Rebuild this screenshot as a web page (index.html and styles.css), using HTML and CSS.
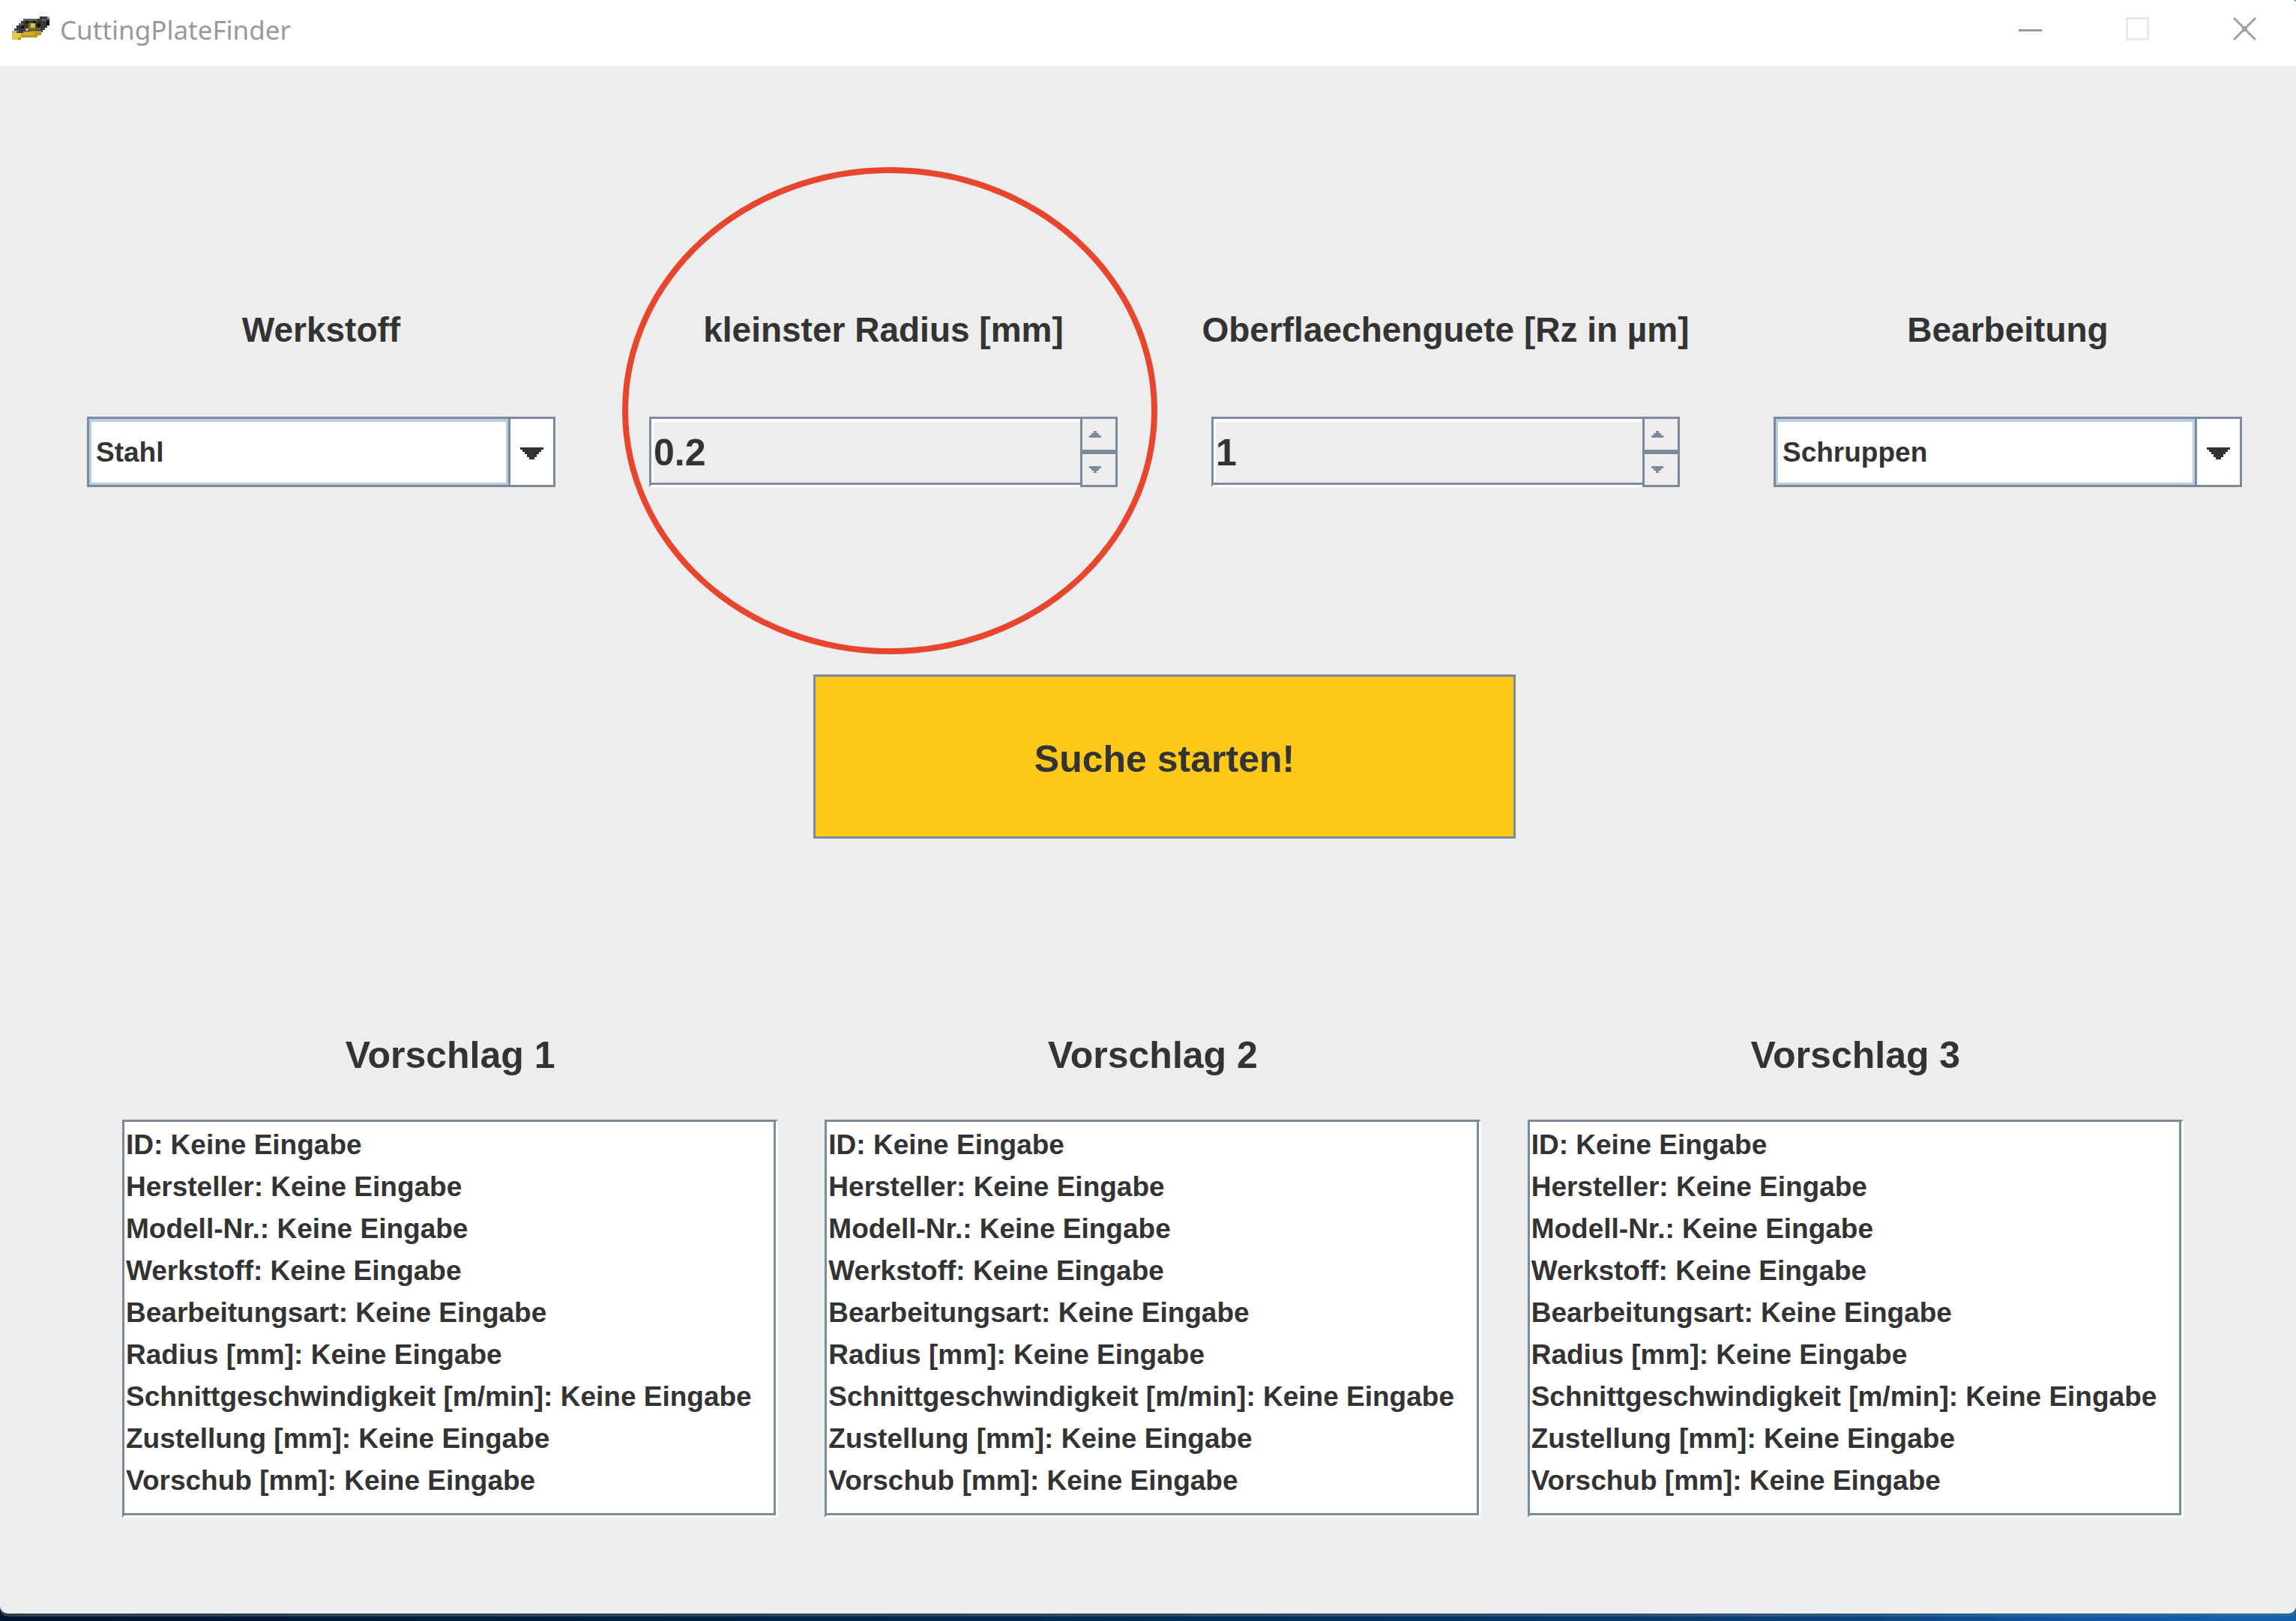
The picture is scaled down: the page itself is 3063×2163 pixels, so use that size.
FILE: index.html
```html
<!DOCTYPE html>
<html lang="de">
<head>
  <meta charset="utf-8">
  <title>CuttingPlateFinder</title>
  <link rel="stylesheet" href="styles.css">
</head>
<body>
  <div class="window">
    <header class="titlebar">
      <svg class="app-icon" viewBox="0 0 50 31" shape-rendering="crispEdges" aria-hidden="true">
        <path d="M0 19H3V16H6V12H9V9H12V6H15V3H37V0H50V12H47V15H44V18H41V21H39V25H34V28H12V31H0Z" fill="#3a3a3a"/>
        <path d="M0 22H15V20H24V19H39V25H34V28H12V31H0Z" fill="#b9971f"/>
        <path d="M0 22H12V28H8V31H0Z" fill="#e2cc45"/>
        <path d="M15 21H30V25H12Z" fill="#cdae2c"/>
        <path d="M15 3H34V6H15ZM9 9H15V12H9ZM40 3H46V6H40ZM3 18H9V21H3ZM30 15H38V18H30Z" fill="#606060"/>
        <path d="M12 12H16V16H12ZM18 6H22V9H18ZM34 9H38V14H34ZM28 6H31V9H28ZM46 6H50V12H46Z" fill="#111"/>
        <path d="M22 9H31V18H22Z" fill="#8a701a"/>
        <path d="M25 9H31V15H25Z" fill="#e0c440"/>
        <path d="M18 16H22V19H18ZM0 19H6V22H0ZM47 0H50V3H47Z" fill="#b5b5b5"/>
      </svg>
      <h1 class="title">CuttingPlateFinder</h1>
      <div class="window-controls">
        <button class="window-button" type="button" aria-label="Minimieren">
          <svg viewBox="0 0 31 31"><path d="M0 17.5H31" stroke="#999" stroke-width="3"/></svg>
        </button>
        <button class="window-button" type="button" aria-label="Maximieren" disabled>
          <svg viewBox="0 0 31 31"><path d="M1.5 1.5H29.5V29.5H1.5Z" fill="none" stroke="#e9e9e9" stroke-width="3"/></svg>
        </button>
        <button class="window-button" type="button" aria-label="Schließen">
          <svg viewBox="0 0 31 31"><path d="M1 1 30 30M30 1 1 30" stroke="#a0a0a0" stroke-width="3"/><path d="M12 12H19V19H12Z" fill="#a0a0a0"/></svg>
        </button>
      </div>
    </header>

    <main class="content">
      <form class="search">
        <div class="fields">
          <div class="field">
            <label class="label" for="werkstoff">Werkstoff</label>
            <div class="combo">
              <select class="combo-select" id="werkstoff"><option>Stahl</option></select>
              <span class="combo-arrow"><svg viewBox="0 0 31 16" shape-rendering="crispEdges"><path d="M0 0H31V3H28V6H25V9H22V13H19V16H12V13H9V9H6V6H3V3H0Z" fill="#333"/></svg></span>
            </div>
          </div>
          <div class="field">
            <label class="label" for="radius">kleinster Radius [mm]</label>
            <div class="spinner">
              <input class="spinner-input" id="radius" type="number" step="0.1" value="0.2">
              <div class="spinner-buttons">
                <button class="spinner-button" type="button" aria-label="Radius erhöhen"><svg viewBox="0 0 16 9"><path d="M6 0H10V3H13V6H16V9H0V6H3V3H6Z" fill="#7b8b9b"/></svg></button>
                <button class="spinner-button" type="button" aria-label="Radius verringern"><svg viewBox="0 0 16 9"><path d="M0 0H16V3H13V6H10V9H6V6H3V3H0Z" fill="#7b8b9b"/></svg></button>
              </div>
            </div>
            <span class="highlight"></span>
          </div>
          <div class="field">
            <label class="label" for="guete">Oberflaechenguete [Rz in µm]</label>
            <div class="spinner">
              <input class="spinner-input" id="guete" type="number" value="1">
              <div class="spinner-buttons">
                <button class="spinner-button" type="button" aria-label="Güte erhöhen"><svg viewBox="0 0 16 9"><path d="M6 0H10V3H13V6H16V9H0V6H3V3H6Z" fill="#7b8b9b"/></svg></button>
                <button class="spinner-button" type="button" aria-label="Güte verringern"><svg viewBox="0 0 16 9"><path d="M0 0H16V3H13V6H10V9H6V6H3V3H0Z" fill="#7b8b9b"/></svg></button>
              </div>
            </div>
          </div>
          <div class="field">
            <label class="label" for="bearbeitung">Bearbeitung</label>
            <div class="combo">
              <select class="combo-select" id="bearbeitung"><option>Schruppen</option></select>
              <span class="combo-arrow"><svg viewBox="0 0 31 16" shape-rendering="crispEdges"><path d="M0 0H31V3H28V6H25V9H22V13H19V16H12V13H9V9H6V6H3V3H0Z" fill="#333"/></svg></span>
            </div>
          </div>
        </div>
        <button class="start" type="button">Suche starten!</button>
      </form>

      <div class="results">
        <section class="result">
          <h2 class="result-title">Vorschlag 1</h2>
          <ul class="result-list">
            <li>ID: Keine Eingabe</li>
            <li>Hersteller: Keine Eingabe</li>
            <li>Modell-Nr.: Keine Eingabe</li>
            <li>Werkstoff: Keine Eingabe</li>
            <li>Bearbeitungsart: Keine Eingabe</li>
            <li>Radius [mm]: Keine Eingabe</li>
            <li>Schnittgeschwindigkeit [m/min]: Keine Eingabe</li>
            <li>Zustellung [mm]: Keine Eingabe</li>
            <li>Vorschub [mm]: Keine Eingabe</li>
          </ul>
        </section>
        <section class="result">
          <h2 class="result-title">Vorschlag 2</h2>
          <ul class="result-list">
            <li>ID: Keine Eingabe</li>
            <li>Hersteller: Keine Eingabe</li>
            <li>Modell-Nr.: Keine Eingabe</li>
            <li>Werkstoff: Keine Eingabe</li>
            <li>Bearbeitungsart: Keine Eingabe</li>
            <li>Radius [mm]: Keine Eingabe</li>
            <li>Schnittgeschwindigkeit [m/min]: Keine Eingabe</li>
            <li>Zustellung [mm]: Keine Eingabe</li>
            <li>Vorschub [mm]: Keine Eingabe</li>
          </ul>
        </section>
        <section class="result">
          <h2 class="result-title">Vorschlag 3</h2>
          <ul class="result-list">
            <li>ID: Keine Eingabe</li>
            <li>Hersteller: Keine Eingabe</li>
            <li>Modell-Nr.: Keine Eingabe</li>
            <li>Werkstoff: Keine Eingabe</li>
            <li>Bearbeitungsart: Keine Eingabe</li>
            <li>Radius [mm]: Keine Eingabe</li>
            <li>Schnittgeschwindigkeit [m/min]: Keine Eingabe</li>
            <li>Zustellung [mm]: Keine Eingabe</li>
            <li>Vorschub [mm]: Keine Eingabe</li>
          </ul>
        </section>
      </div>
    </main>
  </div>
</body>
</html>
```
FILE: styles.css
```css
:root {
  --line: #7b8b9b;
  --panel: #ededed;
  --text: #333;
  --focus: #b5cee4;
}

* {
  box-sizing: border-box;
}

body {
  margin: 0;
  min-height: 100vh;
  display: flex;
  flex-direction: column;
  padding-bottom: 6px;
  color: var(--text);
  font-family: "Liberation Sans", Arial, sans-serif;
  font-weight: bold;
  font-variant-ligatures: none;
  background: linear-gradient(90deg, #00152d 0%, #00264a 40%, #00305c 60%, #0a3d73 78%, #1256a0 90%, #1560aa 100%);
}

button,
input,
select {
  margin: 0;
  padding: 0;
  border: 0;
  border-radius: 0;
  color: inherit;
  font: inherit;
  background: none;
}

svg {
  display: block;
}

/* Window frame with a thin translucent lower edge */
.window {
  flex: 1;
  display: flex;
  flex-direction: column;
  padding-bottom: 4px;
  background: linear-gradient(90deg, #2f3f4c, #2f4a62 50%, #2e5a80 80%, #286a9e);
  border-radius: 0 0 10px 10px;
}

.titlebar {
  display: flex;
  align-items: flex-start;
  height: 88px;
  padding-left: 16px;
  background: #fff;
  border-top-right-radius: 4px;
}

.app-icon {
  width: 50px;
  height: 31px;
  margin-top: 22px;
}

.title {
  flex: 1;
  margin: 0 0 0 14px;
  color: #999;
  font-family: "Noto Sans", "Open Sans", sans-serif;
  font-size: 35px;
  font-weight: 400;
  line-height: 80px;
}

.window-controls {
  display: flex;
  gap: 6px;
}

.window-button {
  display: flex;
  align-items: center;
  justify-content: center;
  width: 137px;
  height: 76px;
}

.window-button svg {
  width: 31px;
  height: 31px;
}

.content {
  flex: 1;
  padding: 326px 0 128px;
  background: var(--panel);
  border-radius: 0 0 10px 10px;
}

.search {
  display: flex;
  flex-direction: column;
  align-items: center;
  gap: 250px;
  padding: 0 72px 0 116px;
}

.fields {
  display: grid;
  grid-template-columns: repeat(4, minmax(0, 1fr));
  gap: 125px;
  width: 100%;
}

.field {
  position: relative;
  display: flex;
  flex-direction: column;
  gap: 90px;
}

.label {
  align-self: center;
  font-size: 46px;
  line-height: 52px;
  white-space: nowrap;
}

.combo {
  position: relative;
  display: flex;
  height: 94px;
  border: 3px solid var(--line);
  background: #fff;
}

.combo-select {
  flex: 1;
  appearance: none;
  padding-left: 6px;
  border: 3px solid var(--focus);
  border-top-width: 4px;
  font-size: 37px;
}

.combo-arrow {
  position: absolute;
  inset: 0 0 0 auto;
  display: flex;
  align-items: center;
  justify-content: center;
  width: 60px;
  padding-top: 4px;
  border-left: 3px solid var(--line);
  background: #fff;
  box-shadow: -3px 0 0 var(--focus);
  pointer-events: none;
}

.combo-arrow svg {
  width: 31px;
  height: 16px;
}

.spinner {
  display: flex;
  height: 94px;
}

.spinner-input {
  flex: 1;
  min-width: 0;
  appearance: textfield;
  padding: 2px 0 0 3px;
  border: 3px solid var(--line);
  border-right-width: 0;
  border-bottom-color: #fff;
  box-shadow: inset 0 -3px 0 var(--line), inset 3px 4px 0 #fff;
  font-size: 50px;
}

.spinner-input::-webkit-inner-spin-button {
  display: none;
}

.spinner-buttons {
  display: flex;
  flex-direction: column;
  width: 50px;
}

.spinner-button {
  flex: 1;
  display: flex;
  align-items: center;
  justify-content: center;
  padding-right: 10px;
  border: 3px solid var(--line);
}

.spinner-button svg {
  width: 16px;
  height: 9px;
}

/* Marker ellipse lying over the field */
.highlight {
  position: absolute;
  inset: -191px -53px -223px -36px;
  border: 8px solid #e8452f;
  border-radius: 50%;
  pointer-events: none;
}

.start {
  width: 100%;
  max-width: 937px;
  height: 219px;
  padding-top: 6px;
  border: 3px solid var(--line);
  background: #fdc81a;
  font-size: 50px;
}

.results {
  display: grid;
  grid-template-columns: repeat(3, minmax(0, 1fr));
  gap: 62px;
  margin-top: 261px;
  padding: 0 150px 0 163px;
}

.result-title {
  margin: 0 0 58px;
  font-size: 50px;
  line-height: 56px;
  text-align: center;
}

.result-list {
  margin: 0;
  padding: 3px 0 18px 2px;
  border: 3px solid var(--line);
  border-right-color: #fff;
  border-bottom-color: #fff;
  background: #fff;
  box-shadow: inset -3px -3px 0 var(--line);
  font-size: 37px;
  line-height: 56px;
  list-style: none;
}
```
